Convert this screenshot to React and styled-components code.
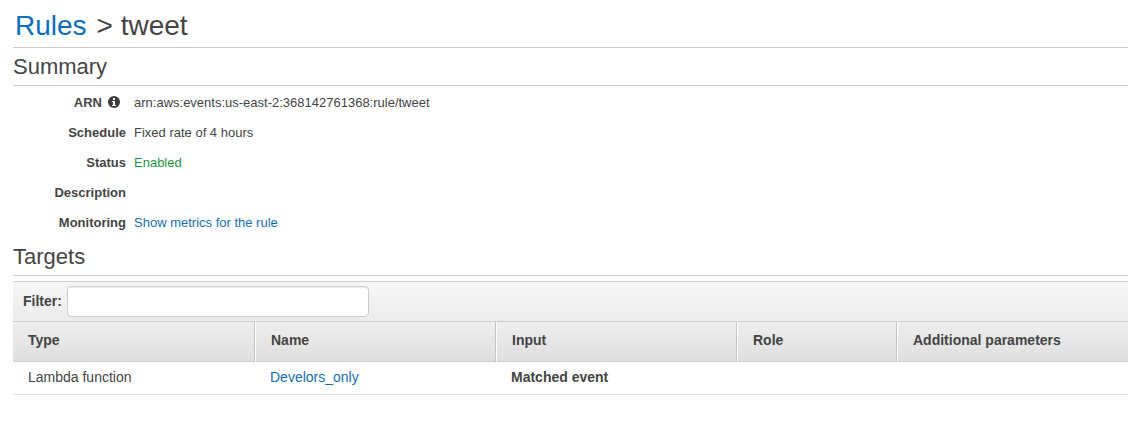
import React from 'react';
import styled, { createGlobalStyle } from 'styled-components';

const GlobalStyle = createGlobalStyle`
  * { box-sizing: border-box; }
  body {
    margin: 0;
    background: #fff;
    color: #444;
    font-family: "Liberation Sans", Arial, sans-serif;
    font-size: 14px;
    line-height: 20px;
  }
`;

const Page = styled.main`
  padding-left: 13px;
`;

const Link = styled.a`
  color: #146eb4;
  text-decoration: none;
  &:hover { text-decoration: underline; }
`;

const Title = styled.h1`
  display: flex;
  gap: 10px;
  margin: 0;
  padding: 6px 2px 1px;
  border-bottom: 1px solid #ccc;
  font-size: 28px;
  line-height: 40px;
  font-weight: 400;
`;

const TitleLink = styled(Link)`
  color: #0a6ebd;
`;

const TitleText = styled.span`
  word-break: normal;
`;

const SectionTitle = styled.h2`
  margin: 0;
  padding: 4px 0;
  border-bottom: 1px solid #ccc;
  font-size: 22px;
  line-height: 29px;
  font-weight: 400;
`;

const Details = styled.dl`
  display: grid;
  grid-template-columns: 113px 1fr;
  column-gap: 8px;
  margin: 0;
  padding: 2px 0 0;
  font-size: 13px;
  line-height: 30px;
`;

const Term = styled.dt`
  display: flex;
  align-items: center;
  justify-content: flex-end;
  gap: 6px;
  font-weight: 700;
`;

const Value = styled.dd`
  margin: 0;
  color: ${(p) => (p.$positive ? '#1a9641' : 'inherit')};
`;

const InfoIcon = styled.svg`
  width: 12px;
  height: 14px;
  margin-right: 6px;
`;

const Panel = styled.div`
  margin-top: 5px;
  border-top: 1px solid #ccc;
`;

const FilterBar = styled.div`
  display: flex;
  align-items: center;
  gap: 5px;
  height: 39px;
  padding-left: 10px;
  background: linear-gradient(#f6f6f6, #ececec);
`;

const FilterLabel = styled.label`
  padding-bottom: 2px;
  font-weight: 700;
`;

const FilterInput = styled.input`
  width: 302px;
  height: 31px;
  padding: 4px 8px;
  border: 1px solid #ccc;
  border-radius: 4px;
  background: #fff;
  box-shadow: inset 0 1px 1px rgba(0, 0, 0, 0.08);
  font: inherit;
  color: inherit;
`;

const Table = styled.table`
  width: 100%;
  table-layout: fixed;
  border-collapse: separate;
  border-spacing: 0;
  text-align: left;
`;

const Column = styled.col`
  width: ${(p) => p.$width};
`;

const HeadCell = styled.th`
  height: 41px;
  padding: 0 15px 4px;
  border-top: 1px solid #ccc;
  border-bottom: 1px solid #ccc;
  border-right: 1px solid #c4c4c4;
  border-left: 1px solid #fff;
  background: linear-gradient(#eee, #dfdfdf);
  &:first-child { border-left: 0; }
  &:last-child { border-right: 0; }
`;

const Cell = styled.td`
  height: 33px;
  padding: 0 15px 2px;
  border-bottom: 1px solid #ddd;
  font-weight: ${(p) => (p.$strong ? 700 : 400)};
`;

const columns = [
  { name: 'Type', width: '242px' },
  { name: 'Name', width: '241px' },
  { name: 'Input', width: '241px' },
  { name: 'Role', width: '160px' },
  { name: 'Additional parameters', width: 'auto' },
];

export default function App() {
  return (
    <Page>
      <GlobalStyle />
      <Title>
        <TitleLink href="#rules">Rules</TitleLink>
        <TitleText>&gt; tweet</TitleText>
      </Title>
      <section>
        <SectionTitle>Summary</SectionTitle>
        <Details>
          <Term>
            ARN
            <InfoIcon viewBox="0 0 12 14" aria-hidden="true">
              <circle cx="6" cy="6" r="6" fill="#3c3c3c" />
              <path d="M5 2h2v2H5zM4 5h3v4h1v1H4V9h1V6H4z" fill="#fff" />
            </InfoIcon>
          </Term>
          <Value>arn:aws:events:us-east-2:368142761368:rule/tweet</Value>
          <Term>Schedule</Term>
          <Value>Fixed rate of 4 hours</Value>
          <Term>Status</Term>
          <Value $positive>Enabled</Value>
          <Term>Description</Term>
          <Value />
          <Term>Monitoring</Term>
          <Value><Link href="#metrics">Show metrics for the rule</Link></Value>
        </Details>
      </section>
      <section>
        <SectionTitle>Targets</SectionTitle>
        <Panel>
          <FilterBar>
            <FilterLabel htmlFor="filter">Filter:</FilterLabel>
            <FilterInput id="filter" type="text" />
          </FilterBar>
          <Table>
            <colgroup>
              {columns.map((c) => <Column key={c.name} $width={c.width} />)}
            </colgroup>
            <thead>
              <tr>{columns.map((c) => <HeadCell key={c.name} scope="col">{c.name}</HeadCell>)}</tr>
            </thead>
            <tbody>
              <tr>
                <Cell>Lambda function</Cell>
                <Cell><Link href="#function">Develors_only</Link></Cell>
                <Cell $strong>Matched event</Cell>
                <Cell />
                <Cell />
              </tr>
            </tbody>
          </Table>
        </Panel>
      </section>
    </Page>
  );
}
